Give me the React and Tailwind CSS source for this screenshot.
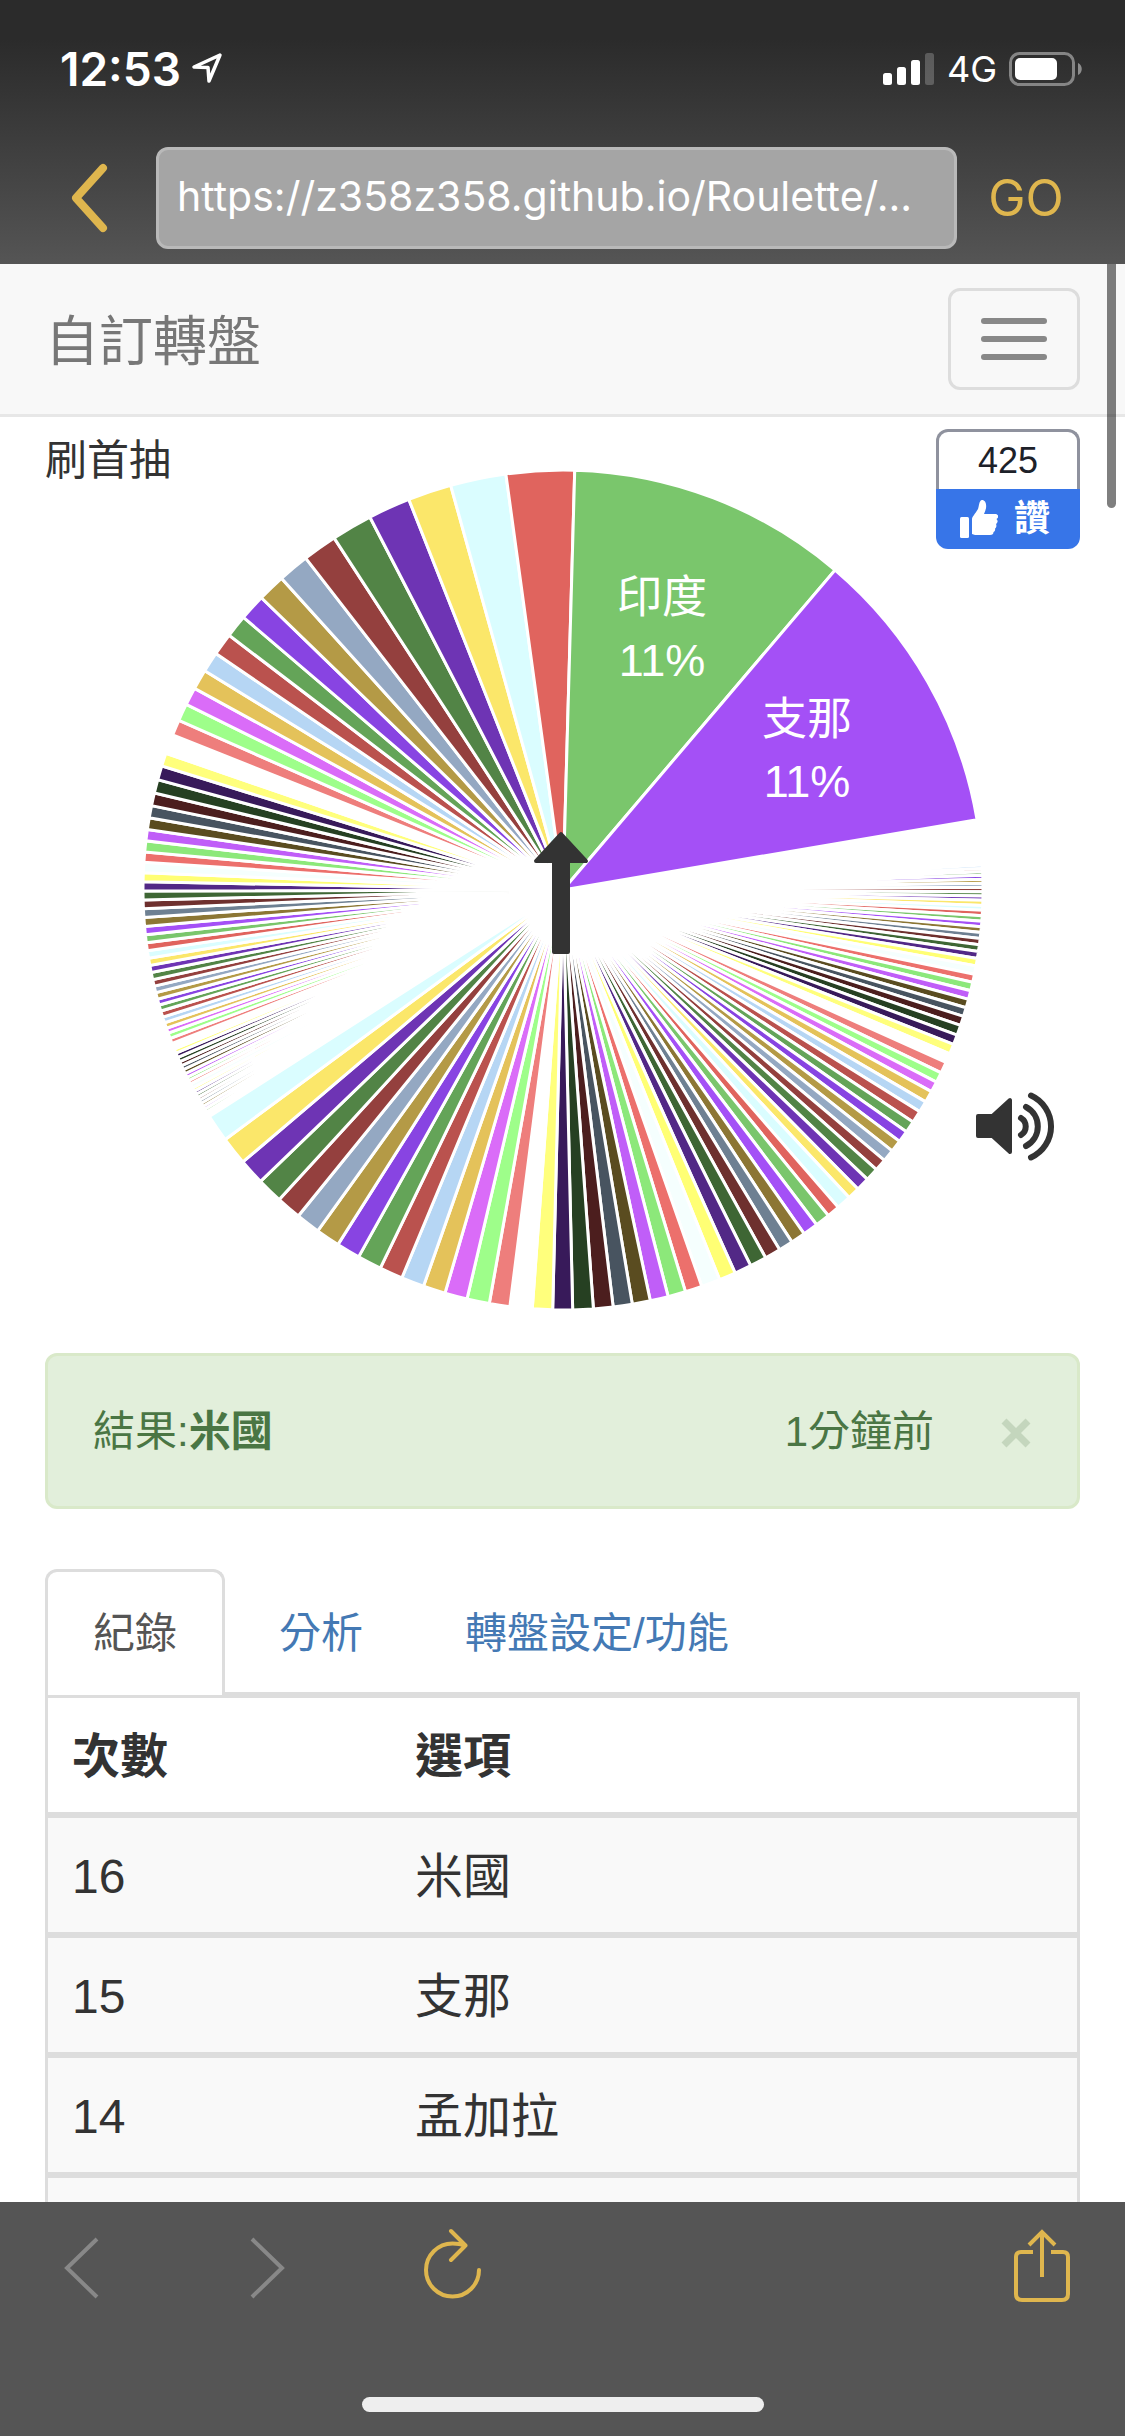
import React from "react";

const PALETTE = [
  "#A450F6", "#7AC66C", "#E0645E", "#DAFDFF", "#FBE76A", "#6E34B4", "#528446",
  "#94403E", "#94A8C2", "#B49A46", "#8844E2", "#64A458", "#BA524E", "#B6D6F4",
  "#E4C25A", "#DA6CF8", "#9EFE8A", "#EE7E7C", "#FFFFFF", "#FFFF7C", "#381A5A",
  "#264022", "#4C1E1E", "#485460", "#5A4C20", "#C05EF8", "#8CE87A", "#EC706C",
  "#F5FFFE", "#FFFF74", "#522886", "#3E6634", "#6E302E", "#6E8092", "#8C7634",
];

// Slice boundaries in degrees, clockwise from the top, listed counterclockwise.
const FIRST_RUN = [
  80.37, 40.38, 1.6, -7.82, -15.51, -21.54, -27.38, -33.03, -37.78, -42.09,
  -45.9, -49.53, -52.66, -55.73, -58.54, -61.31, -63.78, -66.17, -68.34, -71,
  -72.82, -74.76, -76.64, -78.41, -80.1, -81.72, -83.28, -84.8, -86.2, -87.63,
  -88.86, -90.14, -91.37, -92.56, -93.74, -94.98, -96.13, -97.23, -98.31,
  -99.35, -100.34, -101.34, -102.32, -103.23, -104.15, -105.07, -105.9,
  -106.75, -107.62, -108.43, -109.22, -109.92, -110.7, -111.44, -112.25,
  -112.86, -113.5, -114.13, -114.73, -115.31, -115.92, -116.48, -116.98,
  -117.5, -118.12, -118.62, -119.1, -119.58, -120.05, -120.52, -121, -121.45,
  -121.9, -122.3,
];

const SECOND_RUN = [
  237.36, 233.55, 229.66, 226.06, 222.51, 219.08, 215.73, 212.41, 209.13,
  205.79, 202.56, 199.4, 196.32, 193.21, 190.11, 187.27, 184.2, 181.41, 178.68,
  175.85, 173.14, 170.5, 168, 165.5, 163.05, 160.7, 158.1, 155.8, 153.45,
  151.15, 148.95, 146.96, 144.95, 142.85, 140.83, 139.07, 137.07, 135.4,
  133.55, 131.73, 130.08, 128.4, 126.76, 125.15, 123.54, 121.85, 120.3, 118.7,
  117.22, 115.8, 114.25, 112.96, 111.58, 110.21, 108.81, 107.51, 106.28,
  105.09, 103.87, 102.69, 101.57, 100.41, 99.39, 98.42, 97.5, 96.63, 95.8,
  95.02, 94.25, 93.51, 92.78, 92.1, 91.41, 90.82, 90.23, 89.64, 89.09, 88.54,
  87.98, 87.5, 87.07, 86.6, 86.2, 85.8, 85.4, 85,
];

const CX = 563;
const CY = 473;
const R = 420;

function point(deg) {
  const a = (deg * Math.PI) / 180;
  return `${(CX + R * Math.sin(a)).toFixed(2)} ${(CY - R * Math.cos(a)).toFixed(2)}`;
}

function slices(bounds, offset) {
  return bounds.slice(1).map((end, i) => ({
    d: `M${CX} ${CY}L${point(end)}A${R} ${R} 0 0 1 ${point(bounds[i])}Z`,
    fill: PALETTE[(i + offset) % PALETTE.length],
  }));
}

const SLICES = [...slices(SECOND_RUN, 3), ...slices(FIRST_RUN, 0)].reverse();

const ROWS = [
  ["16", "米國"],
  ["15", "支那"],
  ["14", "孟加拉"],
  ["", ""],
];

function StatusBar() {
  return (
    <div className="flex h-[132px] items-center justify-between pr-[43px] pl-[60px] pt-1.5">
      <div className="flex items-center gap-2.5 text-[46px] font-semibold">
        <span>12:53</span>
        <svg className="h-8 w-8" viewBox="0 0 32 32" fill="none" stroke="#fff" strokeWidth="3.500" strokeLinejoin="round">
          <path d="M29 2 3 14l14 .5 1 13.500Z" />
        </svg>
      </div>
      <div className="flex items-center gap-3 text-[36px]">
        <svg className="h-8 w-[52px]" viewBox="0 0 52 32" fill="#fff">
          <rect x="0" y="20" width="9" height="12" rx="2.500" />
          <rect x="14" y="14" width="9" height="18" rx="2.500" />
          <rect x="28" y="7" width="9" height="25" rx="2.500" />
          <rect x="42" y="0" width="9" height="32" rx="2.500" opacity=".22" />
        </svg>
        <span>4G</span>
        <svg className="h-[34px] w-[73px]" viewBox="0 0 73 34">
          <rect x="1.500" y="1.500" width="63" height="31" rx="9" fill="none" stroke="#858585" strokeWidth="3" />
          <rect x="6" y="6" width="42" height="22" rx="5" fill="#fff" />
          <path d="M69 11c5 2 5 10 0 12Z" fill="#8d8d8d" />
        </svg>
      </div>
    </div>
  );
}

function Header() {
  return (
    <header className="h-[264px] shrink-0 bg-linear-to-b from-[#2b2b2b] from-15% to-[#555] font-[Inter,sans-serif] text-white">
      <StatusBar />
      <div className="flex items-center pt-[15px]">
        <button aria-label="Back" className="flex w-[156px] justify-center pl-5">
          <svg className="h-[70px] w-10" viewBox="0 0 40 70" fill="none" stroke="#dfb64e" strokeWidth="8" strokeLinecap="round" strokeLinejoin="round">
            <path d="M35 5 8 35 35 65" />
          </svg>
        </button>
        <input
          aria-label="Address"
          readOnly
          value="https://z358z358.github.io/Roulette/..."
          className="h-[102px] min-w-0 flex-1 rounded-xl border-3 border-[#b9b9b9] bg-[#a5a5a5] pl-[18px] pb-1 text-[41px] text-white outline-none"
        />
        <button className="w-[168px] pr-[30px] text-center text-[50px] text-[#dfb64e]">GO</button>
      </div>
    </header>
  );
}

function Navbar() {
  return (
    <nav className="flex h-[153px] shrink-0 items-center justify-between border-b-3 border-[#e7e7e7] bg-[#f8f8f8] px-[45px]">
      <a href="#home" className="pt-1.5 text-[54px] leading-none text-[#777]">自訂轉盤</a>
      <button aria-label="Menu" className="flex h-[102px] w-[132px] flex-col items-center justify-center gap-3 rounded-xl border-3 border-[#ddd]">
        <span className="h-1.5 w-[66px] rounded-sm bg-[#888]" />
        <span className="h-1.5 w-[66px] rounded-sm bg-[#888]" />
        <span className="h-1.5 w-[66px] rounded-sm bg-[#888]" />
      </button>
    </nav>
  );
}

function Wheel() {
  return (
    <section className="relative">
      <svg className="block w-full" viewBox="0 0 1125 936" role="img" aria-label="轉盤">
        <g stroke="#fff" strokeWidth="3">
          {SLICES.map((s, i) => (
            <path key={i} d={s.d} fill={s.fill} />
          ))}
        </g>
        <g fill="#fff" fontSize="45" textAnchor="middle" className="font-['Liberation_Sans','Noto_Sans_CJK_TC',sans-serif]">
          <text x="662" y="196">印度</text>
          <text x="662" y="259">11%</text>
          <text x="807" y="318">支那</text>
          <text x="807" y="380">11%</text>
        </g>
        <path d="M561 417 586 444H536ZM554 444h14v91h-14Z" fill="#333" stroke="#333" strokeWidth="4" strokeLinejoin="round" />
        <g transform="translate(976 681)">
          <path d="M2 18H16.500L34 2V54L16.500 38H2Z" fill="#333" stroke="#333" strokeWidth="4" strokeLinejoin="round" />
          <path d="M45 20a10 10 0 0 1 0 17M50 9a22 22 0 0 1 0 39M55-2.500a34 34 0 0 1 0 62" fill="none" stroke="#333" strokeWidth="6" strokeLinecap="round" />
        </g>
      </svg>
      <p className="absolute top-5 left-[45px] text-[42px] leading-[48px] text-[#333]">刷首抽</p>
      <div className="absolute top-3 right-[45px] w-36">
        <div className="flex h-[60px] items-center justify-center rounded-t-xl border-3 border-b-0 border-[#8f929e] text-[36px] text-[#1d2129]">425</div>
        <button className="flex h-[60px] w-full items-center justify-center gap-4 rounded-b-xl bg-[#3775e8] pr-1.5 text-[36px] font-bold text-white">
          <svg className="h-[38px] w-[38px]" viewBox="0 0 38 38" fill="#fff">
            <rect x="0" y="17" width="9" height="21" rx="1.500" />
            <path d="M12 34V19c0-2 3-5 6-10 1-2 1-9 4-9 4 0 6 6 2 14h11c4 0 4 4 1.500 5 2 2 1 4-.5 5 1 2 0 4-1 4.500.5 2-.5 3-1.500 3.500 0 2-1 3-3.500 3H15Z" />
          </svg>
          讚
        </button>
      </div>
    </section>
  );
}

function Alert() {
  return (
    <div className="flex h-[156px] items-center rounded-xl border-3 border-[#d9e9c9] bg-[#e2efdb] px-[45px] text-[42px] text-[#4a7644]">
      <span className="flex-1">結果:<strong>米國</strong></span>
      <span>1分鐘前</span>
      <button aria-label="Close" className="ml-[66px] pt-1 text-[#c4d6bd]">
        <svg className="h-8 w-8" viewBox="0 0 32 32" stroke="currentColor" strokeWidth="7">
          <path d="M4 4 28 28M28 4 4 28" />
        </svg>
      </button>
    </div>
  );
}

function Records() {
  return (
    <div className="mt-[60px] text-[42px]">
      <div role="tablist" className="flex gap-1.5 border-b-3 border-[#ddd]">
        <button role="tab" aria-selected="true" className="-mb-[3px] h-[126px] rounded-t-xl border-3 border-b-0 border-[#ddd] bg-white px-[45px] text-[#555]">紀錄</button>
        <button role="tab" aria-selected="false" className="h-[123px] px-12 pt-1.5 text-[#4479b4]">分析</button>
        <button role="tab" aria-selected="false" className="h-[123px] px-12 pt-1.5 text-[#4479b4]">轉盤設定/功能</button>
      </div>
      <table className="w-full table-fixed border-separate border-spacing-0 border-3 border-b-0 border-[#ddd] text-left text-[48px] text-[#333]">
        <thead>
          <tr className="h-[120px]">
            <th className="w-1/3 border-b-6 border-[#ddd] pt-1 pb-0 pl-6 font-bold">次數</th>
            <th className="border-b-6 border-[#ddd] pt-1 pb-0 pl-6 font-bold">選項</th>
          </tr>
        </thead>
        <tbody>
          {ROWS.map(([count, name]) => (
            <tr key={count} className="h-[120px] bg-[#f9f9f9]">
              <td className="border-b-6 border-[#ddd] pt-1 pb-0 pl-6">{count}</td>
              <td className="border-b-6 border-[#ddd] pt-1 pb-0 pl-6">{name}</td>
            </tr>
          ))}
        </tbody>
      </table>
    </div>
  );
}

function Toolbar() {
  return (
    <footer className="flex h-[234px] shrink-0 flex-col items-center justify-between bg-[#555] pt-[22px] pb-6">
      <div className="flex w-full items-center pr-[46px] pl-[60px]">
        <button aria-label="Previous" className="w-[186px]">
          <svg className="h-[90px] w-[42px]" viewBox="0 0 42 90" fill="none" stroke="#888" strokeWidth="4">
            <path d="M37 15 7 44 37 73" />
          </svg>
        </button>
        <button aria-label="Next" className="w-[170px]">
          <svg className="h-[90px] w-[42px]" viewBox="0 0 42 90" fill="none" stroke="#888" strokeWidth="4">
            <path d="M6 15 36 44 6 73" />
          </svg>
        </button>
        <button aria-label="Reload">
          <svg className="h-[90px] w-[74px]" viewBox="0 0 74 90" fill="none" stroke="#dfb64e" strokeWidth="4" strokeLinecap="round" strokeLinejoin="round">
            <path d="M63 46a26.500 26.500 0 1 1-26.500-26.500q7 0 13 2M35 7 49.500 21.500 35 36" />
          </svg>
        </button>
        <span className="flex-1" />
        <button aria-label="Share">
          <svg className="h-[90px] w-[74px]" viewBox="0 0 74 90" fill="none" stroke="#dfb64e" strokeWidth="4">
            <path d="M28 28H16q-5 0-5 5V70q0 6 6 6H57q6 0 6-6V33q0-5-5-5H46M37 53V8M24 21 37 8 50 21" />
          </svg>
        </button>
      </div>
      <div className="h-[15px] w-[402px] rounded-full bg-[#eee]" />
    </footer>
  );
}

export default function App() {
  return (
    <div className="flex h-screen flex-col overflow-hidden bg-white font-['Liberation_Sans','Noto_Sans_CJK_TC',sans-serif]">
      <Header />
      <main className="relative flex min-h-0 flex-1 flex-col overflow-hidden">
        <Navbar />
        <Wheel />
        <div className="px-[45px]">
          <Alert />
          <Records />
        </div>
        <div className="absolute top-0 right-[9px] h-[244px] w-[9px] rounded-b-full bg-black/50" />
      </main>
      <Toolbar />
    </div>
  );
}
